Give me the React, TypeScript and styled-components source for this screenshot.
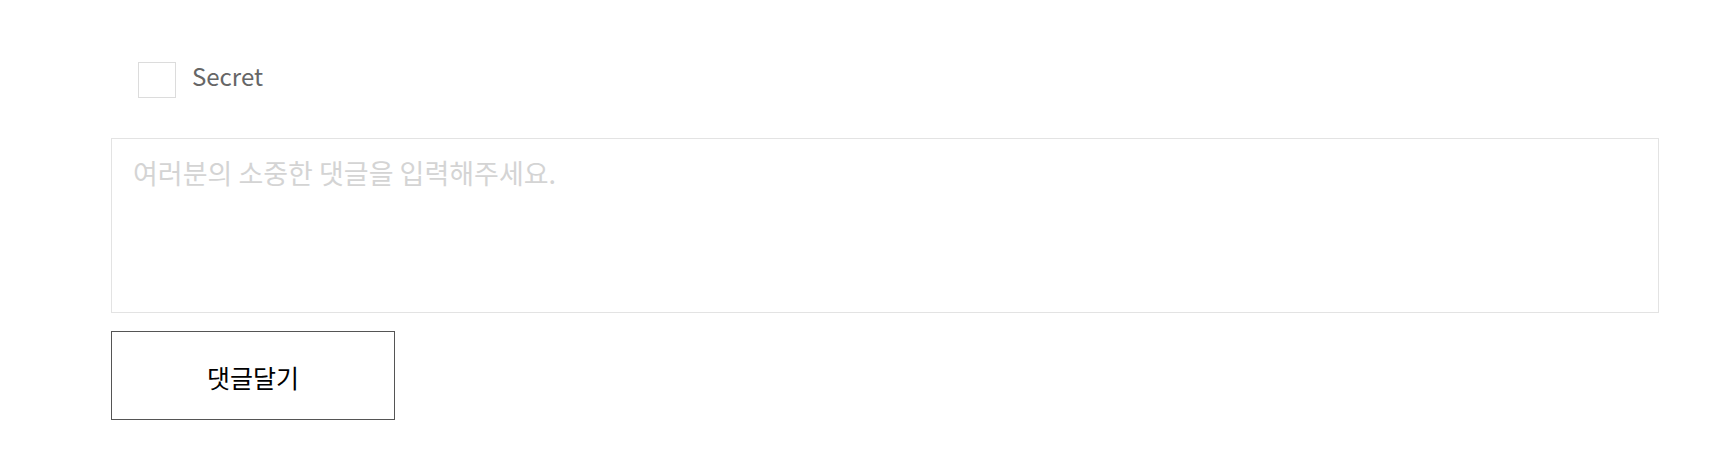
import React from "react";
import styled, { createGlobalStyle } from "styled-components";

const Global = createGlobalStyle`
  html, body { margin: 0; padding: 0; background: #fff; }
  body { font-family: "Noto Sans CJK KR", "Noto Sans", sans-serif; }
  * { box-sizing: border-box; }
`;

const Wrap = styled.div`
  padding: 62px 55px 0 111px;
  width: 1714px;
  display: flex;
  flex-direction: column;
`;

const SecretRow = styled.label`
  display: flex;
  align-items: center;
  gap: 16px;
  margin-left: 27px;
  height: 36px;
`;

const Box = styled.span`
  width: 38px;
  height: 36px;
  border: 1px solid #dcdcdc;
  background: #fff;
`;

const SecretText = styled.span`
  font-size: 24px;
  color: #666;
  line-height: 1;
  margin-bottom: 9px;
`;

const Area = styled.textarea`
  margin-top: 40px;
  width: 1548px;
  height: 175px;
  border: 1px solid #e3e3e3;
  padding: 14px 21px;
  resize: none;
  font-family: "Noto Sans CJK KR", sans-serif;
  font-size: 27px;
  color: #333;
  outline: none;
  &::placeholder { color: #d4d4d4; }
`;

const Submit = styled.button`
  margin-top: 18px;
  width: 284px;
  height: 89px;
  border: 1px solid #555;
  background: #fff;
  padding: 2px 0 0;
  font-family: "Noto Sans CJK KR", sans-serif;
  font-size: 25px;
  color: #000;
  cursor: pointer;
`;

export default function App() {
  return (
    <>
      <Global />
      <Wrap>
        <SecretRow>
          <Box />
          <SecretText>Secret</SecretText>
        </SecretRow>
        <Area placeholder="여러분의 소중한 댓글을 입력해주세요." />
        <Submit>댓글달기</Submit>
      </Wrap>
    </>
  );
}
